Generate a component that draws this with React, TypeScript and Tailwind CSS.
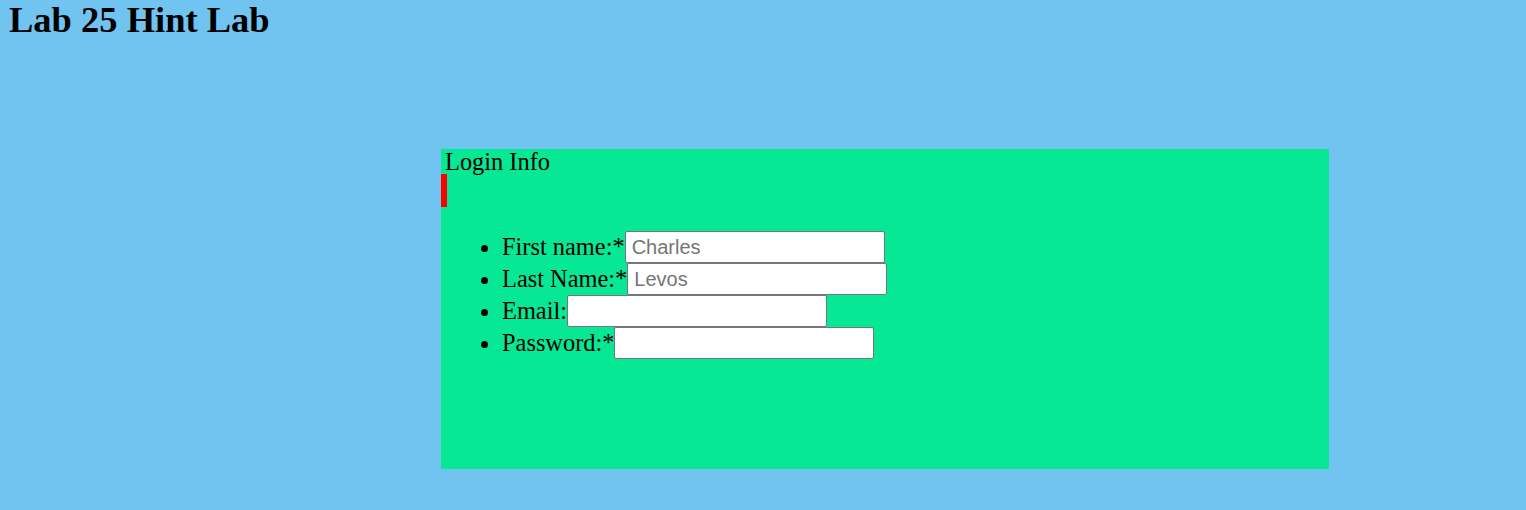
export default function App() {
  const fields = [
    { label: "First name:*", placeholder: "Charles", type: "text" },
    { label: "Last Name:*", placeholder: "Levos", type: "text" },
    { label: "Email:", placeholder: "", type: "email" },
    { label: "Password:*", placeholder: "", type: "password" },
  ];

  return (
    <div className="min-h-[510px] bg-[#71c3f0] font-['Liberation_Serif',serif] text-black">
      <h1 className="pl-[9px] text-[36.5px] font-bold leading-[40px]">Lab 25 Hint Lab</h1>

      <div className="flex pt-[109px] pl-[441px]">
        <div className="h-[320px] w-[888px] bg-[#07e894]">
          <p className="pl-1 text-[24.4px] leading-[25px]">Login Info</p>
          <div className="h-[33px] w-[6px] bg-[#ff0000]" />
          <ul className="mt-6 list-disc pl-[61px] text-[24.4px]">
            {fields.map((f) => (
              <li key={f.label} className="h-8 leading-8">
                {f.label}
                <input
                  type={f.type}
                  placeholder={f.placeholder}
                  className="h-8 w-[260px] rounded-[2px] border border-[#767676] bg-white px-[6px] align-bottom font-['Liberation_Sans',sans-serif] text-xl placeholder:text-[#757575]"
                />
              </li>
            ))}
          </ul>
        </div>
      </div>
    </div>
  );
}
